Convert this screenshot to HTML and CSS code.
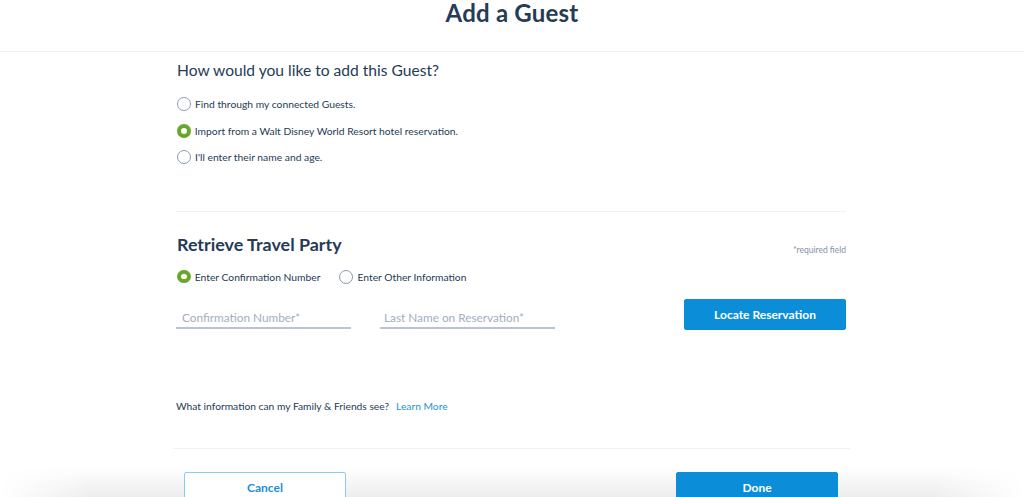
FILE: index.html
```html
<!DOCTYPE html>
<html lang="en">
<head>
<meta charset="utf-8">
<title>Add a Guest</title>
<link rel="stylesheet" href="styles.css">
</head>
<body>
<header class="page-header">
  <h1 class="page-title">Add a Guest</h1>
</header>
<main class="content">
  <h2 class="question">How would you like to add this Guest?</h2>
  <div class="options">
    <label class="radio-row"><span class="radio"></span><span class="radio-label">Find through my connected Guests.</span></label>
    <label class="radio-row"><span class="radio radio-on"></span><span class="radio-label">Import from a Walt Disney World Resort hotel reservation.</span></label>
    <label class="radio-row"><span class="radio"></span><span class="radio-label">I'll enter their name and age.</span></label>
  </div>
  <hr class="divider">
  <div class="section-head">
    <h2 class="section-title">Retrieve Travel Party</h2>
    <span class="required">*required field</span>
  </div>
  <div class="inline-options">
    <label class="radio-row"><span class="radio radio-on"></span><span class="radio-label">Enter Confirmation Number</span></label>
    <label class="radio-row"><span class="radio"></span><span class="radio-label">Enter Other Information</span></label>
  </div>
  <div class="fields">
    <div class="field field-conf"><span class="placeholder">Confirmation Number*</span></div>
    <div class="field field-name"><span class="placeholder">Last Name on Reservation*</span></div>
    <button class="btn btn-primary btn-locate">Locate Reservation</button>
  </div>
  <p class="help">What information can my Family &amp; Friends see?<a class="learn" href="#">Learn More</a></p>
  <hr class="divider divider-wide">
  <div class="footer">
    <button class="btn btn-secondary">Cancel</button>
    <button class="btn btn-primary">Done</button>
  </div>
</main>
<div class="shade"></div>
</body>
</html>
```

FILE: styles.css
```css
html, body {
  margin: 0;
  padding: 0;
  background: #ffffff;
  font-family: Lato, "Open Sans", "Liberation Sans", sans-serif;
  color: #253b56;
  overflow: hidden;
  height: 497px;
}

.page-header {
  height: 51px;
  border-bottom: 1px solid #edf0f4;
  display: flex;
  justify-content: center;
}

.page-title {
  margin: 0;
  font-size: 24px;
  line-height: 25px;
  font-weight: 700;
  letter-spacing: 0.2px;
}

.content {
  width: 670px;
  margin-left: 176px;
  position: relative;
  z-index: 2;
}

.question {
  margin: 7px 0 0;
  font-size: 15.6px;
  line-height: 22px;
  font-weight: 400;
  padding-left: 1px;
}

.options {
  margin-top: 10px;
  display: flex;
  flex-direction: column;
}

.options .radio-row {
  height: 26.5px;
}

.radio-row {
  display: flex;
  align-items: center;
  height: 26px;
  gap: 4px;
}

.radio {
  width: 12px;
  height: 12px;
  border: 1.6px solid #8a9aae;
  border-radius: 50%;
  box-sizing: content-box;
  flex: none;
  margin-left: 1px;
}

.radio-on {
  border: 4.6px solid #6aa62a;
  width: 5.8px;
  height: 5.8px;
  background: #fff;
}

.radio-label {
  font-size: 10.3px;
  line-height: 14px;
}

.divider {
  margin: 40px 0 0;
  border: 0;
  border-top: 1px solid #f0f0f0;
  height: 0;
}

.section-head {
  margin-top: 21px;
  display: flex;
  justify-content: space-between;
  align-items: baseline;
}

.section-title {
  margin: 0;
  font-size: 17.9px;
  line-height: 22px;
  font-weight: 700;
  padding-left: 1px;
}

.required {
  font-size: 8.5px;
  color: #8393a7;
  position: relative;
  top: 2px;
}

.inline-options {
  margin-top: 9px;
  display: flex;
  gap: 18px;
}

.fields {
  margin-top: 9px;
  display: flex;
  align-items: flex-start;
}

.field {
  width: 175px;
  height: 30px;
  border-bottom: 2px solid #b8c4d3;
  box-sizing: border-box;
  padding: 12px 5px 0 6px;
}

.field-name {
  margin-left: 29px;
  padding-left: 4px;
}

.placeholder {
  font-size: 11.8px;
  line-height: 14px;
  color: #a1aebf;
  display: block;
}

.btn {
  font-family: Lato, "Open Sans", "Liberation Sans", sans-serif;
  font-weight: 700;
  font-size: 12px;
  width: 162px;
  height: 32px;
  border-radius: 2px;
  cursor: pointer;
  padding: 0;
}

.btn-primary {
  background: #0b8ed7;
  border: 1px solid #0b8ed7;
  color: #ffffff;
}

.btn-locate {
  margin-left: auto;
  height: 31px;
}

.btn-secondary {
  background: #ffffff;
  border: 1.5px solid #8ccaef;
  color: #1b8fd5;
}

.help {
  margin: 68px 0 0;
  font-size: 10.25px;
  line-height: 16px;
}

.learn {
  color: #1c93d8;
  text-decoration: none;
  margin-left: 7px;
}

.divider-wide {
  margin: 34px -4px 0 -3px;
  border-top: 1px solid #eef1f4;
}

.footer {
  margin: 23px 8px 0;
  display: flex;
  justify-content: space-between;
}

.shade {
  position: absolute;
  left: 0;
  right: 0;
  bottom: 0;
  height: 30px;
  background: linear-gradient(to bottom, rgba(0,0,0,0) 0, rgba(0,0,0,0.07) 100%);
  -webkit-mask-image: linear-gradient(to right, transparent 0, #000 90px, #000 calc(100% - 90px), transparent 100%);
  mask-image: linear-gradient(to right, transparent 0, #000 90px, #000 calc(100% - 90px), transparent 100%);
  z-index: 1;
}
```
